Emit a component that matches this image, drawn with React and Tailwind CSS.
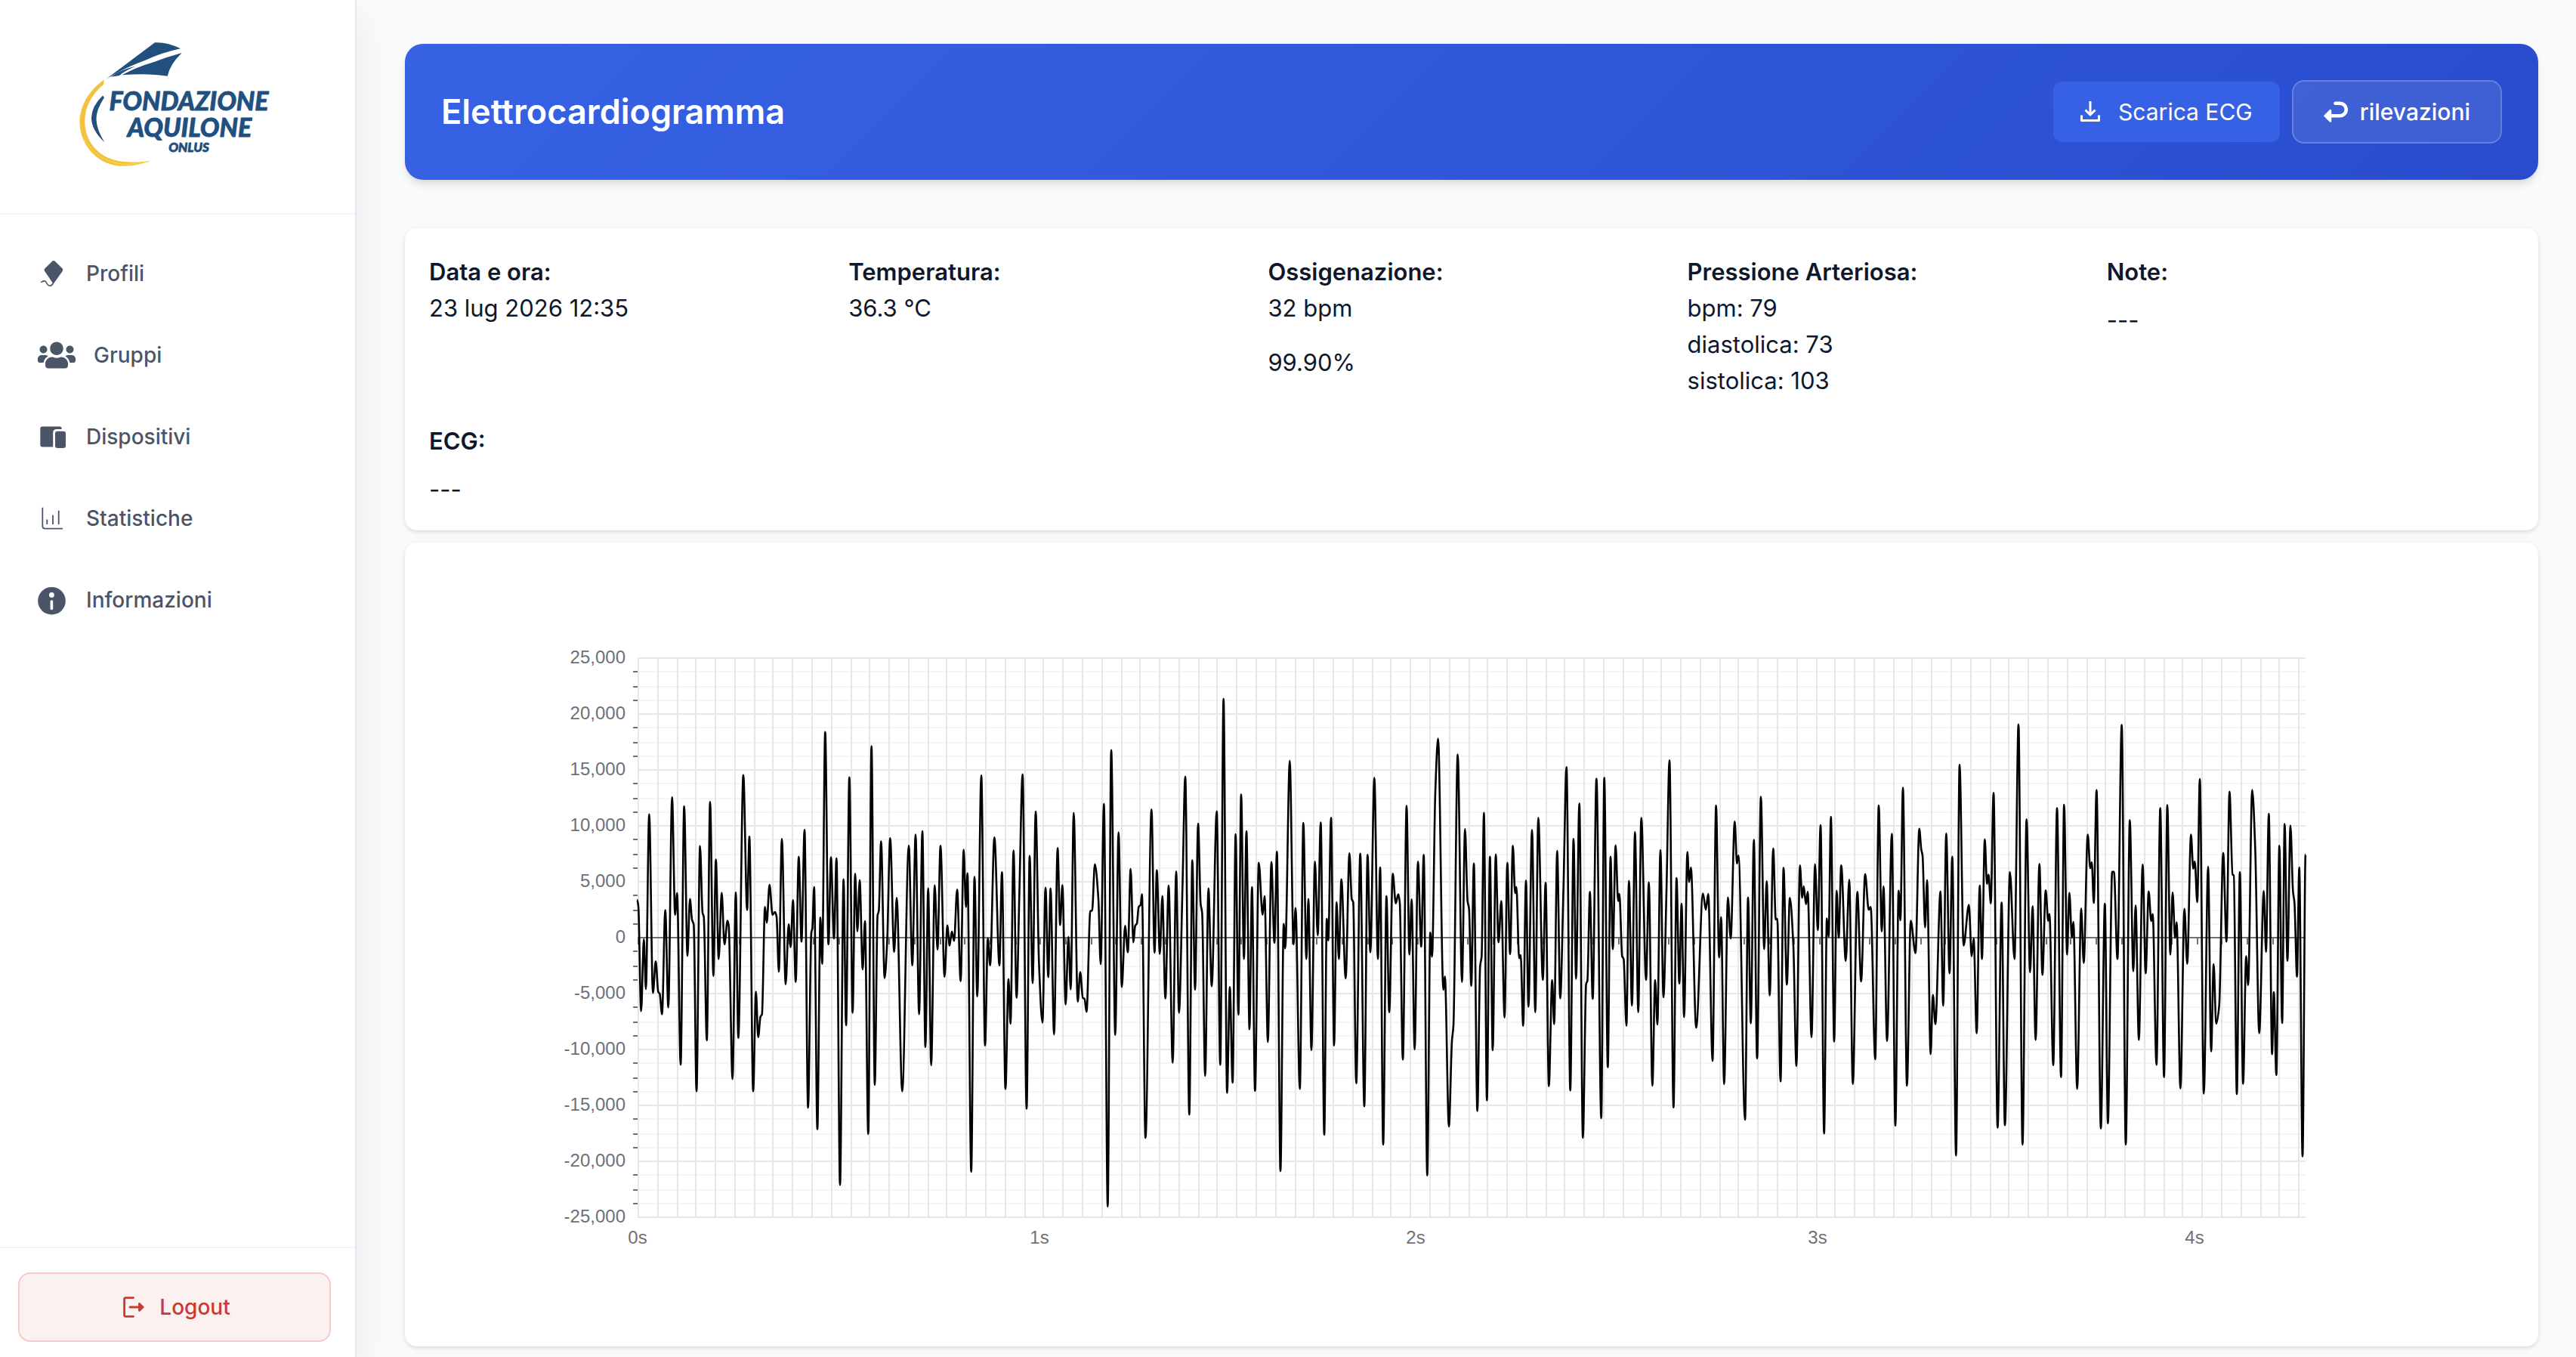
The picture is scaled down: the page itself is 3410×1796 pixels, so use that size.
import { FaUsers } from "react-icons/fa";

// recorded signal, split in blocks: "x,y" turning points with x in thirds of a unit
// from the block start and y in raw counts (766 is the zero line, 1416 is full scale)
const blocks = [
  {
    start: 152,
    points:
      "370,672 375,688 386,954 397,772 405,898 418,455 433,908 444,828 454,905 460,910 469,962 482,698 494,945 509,412 521,710 529,655 543,1090 557,435 570,814 580,670 588,722 595,735 606,1157 620,536 630,705 635,715 647,1028 660,424 673,865 683,570 694,822 706,654 717,785 729,725 734,738 749,1126 762,653 772,1022 792,356 807,698 816,512 831,1157 842,905 851,1020 860,968 866,962 878,690 885,730 896,634 908,710 918,703 924,715 933,854 945,518 960,886 972,734 980,792 989,673 1000,880 1012,563 1023,778 1035,495 1049,1199 1062,755 1066,745 1073,640 1086,1253 1098,717 1105,834 1117,247 1130,785 1140,564 1152,770 1162,567 1176,1394 1190,620 1200,990 1213,362 1226,958 1236,606 1245,752 1254,622 1266,848 1275,726 1288,1265 1301,283 1314,1141 1325,712 1330,700 1339,524 1353,870 1363,780 1375,516 1391,804 1401,667 1423,1157",
  },
  {
    start: 632,
    points:
      "9,535 23,838 36,507 50,962 63,498 75,1045 86,643 98,1091 112,635 123,798 135,535 151,867 162,737 171,788 180,752 189,776 201,646 215,878 227,545 236,690 242,605 257,1361 270,614 281,917 297,357 312,1041 323,770 332,838 349,514 369,838 379,602 393,1151 405,873 413,986 425,547 437,920 448,660 461,354 477,1201 489,561 501,883 513,448 526,830 540,983 552,641 563,868 572,643 586,1013 600,541 610,736 619,635 632,937 643,766 652,899 664,452 680,930 690,855 700,920 707,923 715,956 730,700 737,700 748,582 762,670 771,835 784,429 799,1449 813,293 829,1014 842,501 855,893 868,738 879,805 890,594 901,780 908,738 915,732 922,690 930,685 935,658 949,1275 973,443 985,806 994,597 1006,809 1016,663 1028,922 1041,636 1057,1085 1071,600 1082,958 1096,640 1107,360 1123,1216 1135,572 1146,900 1158,479 1168,682 1174,705 1186,1118 1199,643 1212,891 1232,448 1246,1090 1259,163 1273,1161 1284,893 1295,1135 1307,506 1318,963 1329,405 1340,822 1350,498 1362,1000 1372,640",
  },
  {
    start: 1092,
    points:
      "4,1156 19,578 34,710 42,663 55,1032 69,576 81,781 91,550 105,1359 118,733 124,795 142,320 157,785 165,693 182,1151 196,477 208,822 216,670 228,1053 242,575 253,762 265,476 279,1267 289,720 295,775 306,464 318,1041 328,678 337,822 347,620 364,871 379,554 388,670 394,678 406,1137 422,555 438,1195 451,558 462,805 478,363 492,822 501,590 513,1292 526,663 537,957 551,606 563,681 573,658 579,680 591,1077 606,434 617,811 626,671 638,1051 651,575 664,791 674,558 688,1370 700,755 707,816 720,400 731,264 752,900 758,866 774,1246 786,1030 792,990 809,304 826,880 838,493 848,675 854,695 863,890 873,580 887,1207 898,840 904,815 913,452 925,1180 937,563 948,1053 960,557 971,780 982,675 995,970 1006,578 1017,810 1028,535 1037,655 1042,640 1053,820 1059,812 1069,991 1080,623 1090,943 1104,495 1117,957 1129,464 1147,875 1158,629 1171,1144 1184,875 1192,987 1204,548 1216,922 1229,640 1241,336 1256,1155 1269,518 1279,872 1292,428 1306,1275 1319,885 1324,877 1334,652 1345,923 1360,365 1379,1225",
  },
  {
    start: 1552,
    points:
      "11,363 25,1096 36,563 45,797 56,534 66,675 71,657 82,815 88,822 99,991 109,624 121,940 133,500 146,957 158,464 177,875 188,628 202,1143 213,875 222,988 234,546 246,919 258,650 270,319 286,1198 298,617 309,884 318,682 328,969 341,551 348,627 355,590 376,996 403,656 414,697 424,657 441,1080 455,433 467,818 475,716 487,1139 502,666 513,770 529,474 538,580 544,560 570,1229 582,666 593,985 605,520 618,1074 633,411 646,797 656,625 668,914 682,542 692,722 698,720 711,1132 723,591 736,887 748,667 762,790 774,1093 788,585 797,667 803,638 812,683 819,652 834,1020 848,582 859,749 870,483 884,1264 895,719 902,766 911,462 924,1031 934,649 942,768 952,585 970,827 984,621 998,1139 1016,652 1031,879 1047,607 1061,697 1069,690 1087,1076 1101,433 1113,752 1120,638 1134,1030 1153,505 1167,1244 1180,649 1187,724 1197,388 1213,1143 1228,725 1247,807 1262,492 1270,545 1275,560 1285,742 1293,622 1307,1063 1316,913 1326,987 1346,651 1357,940 1369,504 1382,858 1393,563 1408,1320",
  },
  {
    start: 2012,
    points:
      "42,330 58,788 79,685 90,815 98,770 110,1010 122,636 131,822 142,519 151,632 157,608 166,681 177,401 193,1249 209,679 222,1243 242,602 260,822 276,228 292,1292 308,468 322,856 332,688 344,1027 359,581 371,862 384,648 394,725 399,708 414,1091 429,440 445,1121 457,431 469,811 478,654 488,768 494,728 509,1151 525,694 535,832 551,507 561,592 567,577 575,680 586,394 603,1251 619,682 631,1238 648,601 655,601 669,822 686,229 702,1292 718,470 732,853 741,686 754,1027 769,583 781,858 793,651 803,726 809,708 824,1090 839,440 854,1121 867,432 879,811 888,653 898,769 904,729 919,1150 935,695 946,834 961,507 970,593 976,575 986,678 996,366 1012,1163 1029,588 1041,1056 1051,835 1061,986 1073,940 1089,553 1102,778 1114,398 1126,608 1131,610 1143,1164 1155,602 1168,1138 1180,815 1188,888 1204,394 1216,540 1232,1010 1250,650 1259,804 1270,454 1283,1063 1290,906 1300,1116 1312,535 1323,984 1333,480 1344,827 1356,484 1366,650 1372,680 1382,867 1391,590 1404,1322 1416,557",
  },
];

const LEFT = 276;
const RIGHT = 2484;
const TOP = 120;
const BOTTOM = 860;
const ZERO = 490;

const signal = blocks.flatMap((block) =>
  block.points.split(" ").map((pair) => {
    const [x, y] = pair.split(",").map(Number);
    return [block.start + x / 3, ZERO + ((y - 766) * (BOTTOM - TOP)) / 1416];
  })
);

// cubic curve that stays flat on every peak and valley
const smoothPath = (pts) => {
  const slopes = pts.map((p, i) => {
    if (i === 0 || i === pts.length - 1) return 0;
    const a = (p[1] - pts[i - 1][1]) / (p[0] - pts[i - 1][0]);
    const b = (pts[i + 1][1] - p[1]) / (pts[i + 1][0] - p[0]);
    return a * b <= 0 ? 0 : (2 * a * b) / (a + b);
  });
  let d = `M${pts[0][0]} ${pts[0][1]}`;
  for (let i = 1; i < pts.length; i++) {
    const [x0, y0] = pts[i - 1];
    const [x1, y1] = pts[i];
    const h = (x1 - x0) / 3;
    d += `C${x0 + h} ${y0 + slopes[i - 1] * h} ${x1 - h} ${y1 - slopes[i] * h} ${x1} ${y1}`;
  }
  return d;
};

const snap = (v) => Math.round(v / 2) * 2 + 1;

const majors = Array.from({ length: 11 }, (_, i) => ({
  y: TOP + i * 74,
  label: (25000 - i * 5000).toLocaleString("en-US"),
}));
const minors = Array.from({ length: 40 }, (_, i) => TOP + i * 18.5).filter(
  (_, i) => i % 4 !== 0
);
const columns = Array.from({ length: 87 }, (_, i) => snap(LEFT + i * 25.56));
const ticks = Array.from({ length: 67 }, (_, i) => snap(LEFT + i * 33.28));
const seconds = [
  { x: 276, label: "0s" },
  { x: 808, label: "1s" },
  { x: 1306, label: "2s" },
  { x: 1838, label: "3s" },
  { x: 2337, label: "4s" },
];

function EcgChart() {
  return (
    <svg
      viewBox="0 0 2760 1000"
      className="block w-full h-auto"
      role="img"
      aria-label="Tracciato ECG"
    >
      {minors.map((y) => (
        <g key={y}>
          <path d={`M${LEFT} ${snap(y)}H${RIGHT}`} stroke="#f4f5f7" strokeWidth="2" />
          <path d={`M${LEFT - 6} ${snap(y)}H${LEFT}`} stroke="#6e7079" strokeWidth="2" />
        </g>
      ))}
      {majors.map((m) => (
        <path key={m.label} d={`M${LEFT} ${m.y + 1}H${RIGHT}`} stroke="#e5e5ea" strokeWidth="2" />
      ))}
      {columns.map((x) => (
        <path key={x} d={`M${x} ${TOP}V${BOTTOM + 2}`} stroke="#e5e5ea" strokeWidth="2" />
      ))}
      {ticks.map((x) => (
        <path key={x} d={`M${x} ${ZERO}v10`} stroke="#6e7079" strokeWidth="2" />
      ))}
      <path d={`M${LEFT} ${ZERO + 1}H${RIGHT}`} stroke="#6e7079" strokeWidth="2" />
      <path
        d={smoothPath(signal)}
        fill="none"
        stroke="#000"
        strokeWidth="2.6"
        strokeLinejoin="bevel"
      />
      <g className="font-['Liberation_Sans',sans-serif] text-[24px]" fill="#6e7079">
        {majors.map((m) => (
          <text key={m.label} x={LEFT - 16} y={m.y + 8} textAnchor="end">
            {m.label}
          </text>
        ))}
        {seconds.map((s) => (
          <text key={s.label} x={s.x} y={896} textAnchor="middle">
            {s.label}
          </text>
        ))}
      </g>
    </svg>
  );
}

function Logo() {
  return (
    <svg
      viewBox="104 53 262 176"
      className="w-[262px]"
      role="img"
      aria-label="Fondazione Aquilone Onlus"
    >
      <g fill="#21507f">
        <path d="M139 105.8L205 56.2Q222 55.5 239 64.3Q213 70 193 79.5Q170 88 156 96Q150 99 146 101.5Q143 103 139 105.8Z" />
        <path d="M161.5 99.3Q180 89 204 82Q222 75 240.7 70Q225 85 221.7 100.8Q196 96.5 161.5 99.3Z" />
        <path d="M147 101.5Q160 92 180 87.5Q166 93 158 100Q152 101 147 101.5Z" />
        <path d="M136 126.5L138 129Q127 146 127.5 158Q128 172 138.5 188.5Q121 172 121 156Q121.5 140 136 126.5Z" />
      </g>
      <path
        d="M137.8 105.5C118 119 105.5 140 105.5 162C106 196 134 220.5 163 219.8C178 219.5 190 216.5 200 212.5C188 214.5 178 215.5 165 214C134 212 112 190 112.3 160C112.5 141 122 124 137 112Z"
        fill="#f3c240"
      />
      <path
        d="M110 182Q128 215 165 217.5Q182 217 197 213.5"
        fill="none"
        stroke="#f7dc3c"
        strokeWidth="1"
      />
      <g
        className="font-['Lato',sans-serif] font-black italic"
        fill="#21507f"
        stroke="#21507f"
        strokeWidth="0.8"
        strokeLinejoin="round"
        textAnchor="middle"
      >
        <text x="250" y="146" className="text-[34px]">
          FONDAZIONE
        </text>
        <text x="251" y="181" className="text-[34px]">
          AQUILONE
        </text>
        <text x="250" y="201" className="text-[17px]">
          ONLUS
        </text>
      </g>
    </svg>
  );
}

function KiteIcon() {
  return (
    <svg viewBox="0 -1 40 40" className="w-10" fill="currentColor">
      <path d="M19.2 2.8Q21 1.2 22.8 2.8L32.5 12.3Q34 14 32.8 15.8L21.6 31.5H19.8L9 15.8Q7.8 14 9.5 12.3Z" />
      <path
        d="M4.5 30.5C7 28.5 10 28.2 11.2 30.5C12 32.5 13.5 35.3 16.5 35.2Q20 34.5 20.8 30"
        fill="none"
        stroke="currentColor"
        strokeWidth="1.6"
        strokeLinecap="round"
      />
    </svg>
  );
}

function DevicesIcon() {
  return (
    <svg viewBox="0 -1 40 40" className="w-10" fill="currentColor">
      <path d="M6 5.6H29Q31.7 5.6 31.7 8.9H24.5Q20.2 9.2 20.2 13.5V32.4H6Q3.3 32.4 3.3 29.7V8.3Q3.3 5.6 6 5.6Z" />
      <rect x="23" y="11.7" width="14" height="22.2" rx="3" />
    </svg>
  );
}

function StatsIcon() {
  return (
    <svg
      viewBox="0 -1 40 40"
      className="w-10"
      fill="none"
      stroke="currentColor"
      strokeWidth="1.8"
    >
      <path d="M6.3 4.8V29Q6.3 32.6 10 32.6H33M12.3 20.5V27M20 14.8V27M27.7 8.7V27" />
    </svg>
  );
}

function InfoIcon() {
  return (
    <svg viewBox="0 -1 40 40" className="w-10">
      <circle cx="18.5" cy="20.2" r="18.3" fill="currentColor" />
      <circle cx="18.4" cy="12.5" r="3.4" fill="#fff" />
      <path d="M18.4 21V30.5" stroke="#fff" strokeWidth="3.6" strokeLinecap="round" />
    </svg>
  );
}

function DownloadIcon() {
  return (
    <svg
      viewBox="0 0 26 28"
      className="w-[26px]"
      fill="none"
      stroke="currentColor"
      strokeWidth="3"
      strokeLinejoin="round"
    >
      <path d="M1.5 18.5V25.5H24.5V18.5M13 0V18M6.5 11.5L13 18L19.5 11.5" />
    </svg>
  );
}

function ReturnIcon() {
  return (
    <svg viewBox="0 0 32 28" className="w-8">
      <path
        d="M9 19.3H21.5A8.2 8.2 0 0 0 21.5 2.7H15.5"
        fill="none"
        stroke="currentColor"
        strokeWidth="4.6"
        strokeLinecap="round"
      />
      <path
        d="M1.5 19.3L9 12V26.5Z"
        fill="currentColor"
        stroke="currentColor"
        strokeWidth="2.5"
        strokeLinejoin="round"
      />
    </svg>
  );
}

function LogoutIcon() {
  return (
    <svg
      viewBox="0 0 28 28"
      className="w-7"
      fill="none"
      stroke="currentColor"
      strokeWidth="2.8"
      strokeLinecap="round"
      strokeLinejoin="round"
    >
      <path d="M13.5 1.6H3.5Q1.6 1.6 1.6 3.5V24.5Q1.6 26.4 3.5 26.4H13.5M9 14H26" />
      <path d="M21.5 9.5L26 14L21.5 18.5Z" fill="currentColor" />
    </svg>
  );
}

const links = [
  { name: "Profili", icon: <KiteIcon /> },
  { name: "Gruppi", icon: <FaUsers className="w-[50px] h-10" /> },
  { name: "Dispositivi", icon: <DevicesIcon /> },
  { name: "Statistiche", icon: <StatsIcon /> },
  { name: "Informazioni", icon: <InfoIcon /> },
];

function Sidebar() {
  return (
    <aside className="sticky top-0 z-10 flex h-screen w-[472px] shrink-0 flex-col border-r-2 border-[#e2e8f0] bg-white shadow-[0_20px_50px_rgba(0,0,0,0.07)]">
      <div className="flex h-[284px] items-center justify-center border-b-2 border-slate-100">
        <Logo />
      </div>
      <nav className="flex flex-1 flex-col gap-4 pt-8">
        {links.map((item) => (
          <a
            key={item.name}
            href="#"
            className="flex h-[92px] items-center gap-6 px-[50px] text-[28px] font-medium text-[#4a5568]"
          >
            {item.icon}
            {item.name}
          </a>
        ))}
      </nav>
      <div className="border-t-2 border-slate-100 px-6 pt-8 pb-5">
        <button className="flex h-[92px] w-[414px] cursor-pointer items-center justify-center gap-5 rounded-2xl border-2 border-[#f5c9c8] bg-[#fcf1f1] pl-1.5 text-[28px] font-medium text-[#c93a32]">
          <LogoutIcon />
          Logout
        </button>
      </div>
    </aside>
  );
}

function Field({ label, children }) {
  return (
    <div>
      <p className="font-semibold">{label}</p>
      {children}
    </div>
  );
}

function App() {
  return (
    <div className="flex min-h-screen bg-[#f9fafc] font-['Inter',sans-serif] text-slate-900">
      <Sidebar />
      <main className="min-w-0 flex-1 pt-[58px] pr-[50px] pb-3 pl-16">
        <header className="mb-16 flex h-[180px] items-center justify-between rounded-3xl bg-linear-135 from-[#3762e4] to-[#294ccf] px-12 text-white shadow-[0_8px_12px_-2px_rgba(0,0,0,0.1),0_4px_8px_-4px_rgba(0,0,0,0.1)]">
          <h1 className="text-[45px] font-semibold">Elettrocardiogramma</h1>
          <div className="flex items-center gap-4 text-[30px]">
            <button className="flex h-20 cursor-pointer items-center gap-6 rounded-xl bg-[#3761e4] px-9">
              <DownloadIcon />
              Scarica ECG
            </button>
            <button className="flex h-[84px] cursor-pointer items-center gap-4 rounded-2xl border-2 border-white/20 bg-white/10 px-10 font-medium">
              <ReturnIcon />
              rilevazioni
            </button>
          </div>
        </header>

        <section className="mb-4 grid grid-cols-5 gap-x-4 gap-y-8 rounded-2xl bg-white px-8 pt-[34px] pb-[30px] text-[31px] leading-[48px] shadow-[0_2px_6px_rgba(0,0,0,0.1),0_2px_4px_-2px_rgba(0,0,0,0.1)]">
          <Field label="Data e ora:">
            <p>23 lug 2026 12:35</p>
          </Field>
          <Field label="Temperatura:">
            <p>36.3 °C</p>
          </Field>
          <Field label="Ossigenazione:">
            <p>32 bpm</p>
            <p className="mt-6">99.90%</p>
          </Field>
          <Field label="Pressione Arteriosa:">
            <p>bpm: 79</p>
            <p>diastolica: 73</p>
            <p>sistolica: 103</p>
          </Field>
          <Field label="Note:">
            <p className="mt-4">---</p>
          </Field>
          <Field label="ECG:">
            <p className="mt-4">---</p>
          </Field>
        </section>

        <section className="rounded-2xl bg-white p-8 shadow-[0_2px_6px_rgba(0,0,0,0.1),0_2px_4px_-2px_rgba(0,0,0,0.1)]">
          <EcgChart />
        </section>
      </main>
    </div>
  );
}

export default App;
